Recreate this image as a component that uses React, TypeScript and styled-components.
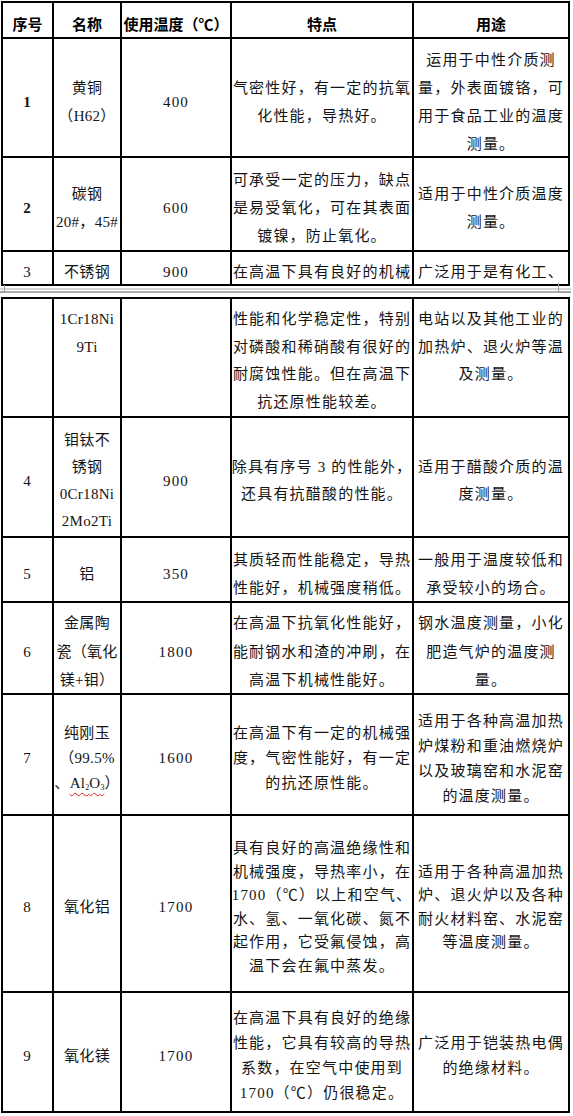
import React from "react";
import styled, { createGlobalStyle } from "styled-components";

const GlobalStyle = createGlobalStyle`
  html, body {
    margin: 0;
    padding: 0;
    background: #fff;
  }
  body {
    font-family: "Liberation Serif", "Noto Sans CJK SC", serif;
    color: #141414;
  }
`;

const Page = styled.div`
  padding: 1px 0 0 1px;
  width: 572px;
`;

const Sheet = styled.div<{ $rows: string }>`
  display: grid;
  grid-template-columns: 49px 66px 108px 180px 154px;
  grid-template-rows: ${(p) => p.$rows};
  gap: 2px;
  padding: 2px;
  background: #000;
  width: max-content;
`;

const HeadCell = styled.div`
  background: #fff;
  display: flex;
  align-items: center;
  justify-content: center;
  padding-top: 7px;
  font-family: "Noto Sans CJK SC", sans-serif;
  font-size: 15px;
  font-weight: 700;
  line-height: 20px;
  color: #000;
  white-space: nowrap;
`;

const Cell = styled.div<{ $lh: number; $top?: boolean; $bold?: boolean; $ls: number }>`
  background: #fff;
  display: flex;
  flex-direction: column;
  align-items: center;
  justify-content: ${(p) => (p.$top ? "flex-start" : "center")};
  padding-top: ${(p) => (p.$top ? 7 : 8)}px;
  font-size: 15px;
  letter-spacing: ${(p) => p.$ls}px;
  line-height: ${(p) => p.$lh}px;
  font-weight: ${(p) => (p.$bold ? 700 : 400)};
  white-space: nowrap;
  overflow: hidden;
`;

const Line = styled.div``;

const Sub = styled.sub`
  font-size: 8px;
  line-height: 0;
  vertical-align: -2px;
  letter-spacing: 0;
`;

const Spell = styled.span`
  text-decoration: underline wavy #e02424;
  text-decoration-skip-ink: none;
  text-underline-offset: 4px;
  text-decoration-thickness: 1px;
`;

const Break = styled.div`
  position: relative;
  height: 11px;
  padding-top: 2px;
  box-sizing: border-box;
  display: flex;
  flex-direction: column;
  gap: 1px;
  width: 571px;
  margin-left: -1px;

  &::before {
    content: "";
    position: absolute;
    left: 0;
    top: -1px;
    width: 4px;
    height: 7px;
    border-right: 1px solid #9a9a9a;
    border-bottom: 1px solid #9a9a9a;
  }
  &::after {
    content: "";
    position: absolute;
    left: 558px;
    top: -3px;
    width: 12px;
    height: 9px;
    border-left: 1px solid #9a9a9a;
    border-bottom: 1px solid #9a9a9a;
  }
`;

const Rule = styled.div<{ $tone: string }>`
  height: 2px;
  background: ${(p) => p.$tone};
`;

type Content = string | React.ReactNode[];

type Row = {
  lh: number;
  top?: boolean;
  bold?: boolean;
  cells: Content[];
};

const headers = ["序号", "名称", "使用温度（℃）", "特点", "用途"];

// letter spacing per column: the name column is narrow and holds latin runs
const spacing = [1.2, 0.3, 1.2, 1.2, 1.2];

const firstPart: Row[] = [
  {
    lh: 28,
    bold: true,
    cells: [
      "1",
      ["黄铜", "（H62）"],
      "400",
      ["气密性好，有一定的抗氧", "化性能，导热好。"],
      ["运用于中性介质测", "量，外表面镀铬，可", "用于食品工业的温度", "测量。"],
    ],
  },
  {
    lh: 28,
    bold: true,
    cells: [
      "2",
      ["碳钢", "20#，45#"],
      "600",
      ["可承受一定的压力，缺点", "是易受氧化，可在其表面", "镀镍，防止氧化。"],
      ["适用于中性介质温度", "测量。"],
    ],
  },
  {
    lh: 24,
    cells: ["3", "不锈钢", "900", "在高温下具有良好的机械", "广泛用于是有化工、"],
  },
];

const secondPart: Row[] = [
  {
    lh: 27.5,
    top: true,
    cells: [
      "",
      ["1Cr18Ni", "9Ti"],
      "",
      ["性能和化学稳定性，特别", "对磷酸和稀硝酸有很好的", "耐腐蚀性能。但在高温下", "抗还原性能较差。"],
      ["电站以及其他工业的", "加热炉、退火炉等温", "及测量。"],
    ],
  },
  {
    lh: 27,
    cells: [
      "4",
      ["钼钛不", "锈钢", "0Cr18Ni", "2Mo2Ti"],
      "900",
      ["除具有序号 3 的性能外，", "还具有抗醋酸的性能。"],
      ["适用于醋酸介质的温", "度测量。"],
    ],
  },
  {
    lh: 28,
    cells: [
      "5",
      "铝",
      "350",
      ["其质轻而性能稳定，导热", "性能好，机械强度稍低。"],
      ["一般用于温度较低和", "承受较小的场合。"],
    ],
  },
  {
    lh: 28.5,
    cells: [
      "6",
      ["金属陶", "瓷（氧化", "镁+钼）"],
      "1800",
      ["在高温下抗氧化性能好，", "能耐钢水和渣的冲刷，在", "高温下机械性能好。"],
      ["钢水温度测量，小化", "肥造气炉的温度测", "量。"],
    ],
  },
  {
    lh: 25,
    cells: [
      "7",
      [
        "纯刚玉",
        "（99.5%",
        <>
          、<Spell>Al<Sub>2</Sub>O<Sub>3</Sub></Spell>）
        </>,
      ],
      "1600",
      ["在高温下有一定的机械强", "度，气密性能好，有一定", "的抗还原性能。"],
      ["适用于各种高温加热", "炉煤粉和重油燃烧炉", "以及玻璃窑和水泥窑", "的温度测量。"],
    ],
  },
  {
    lh: 23.5,
    cells: [
      "8",
      "氧化铝",
      "1700",
      [
        "具有良好的高温绝缘性和",
        "机械强度，导热率小，在",
        "1700（℃）以上和空气、",
        "水、氢、一氧化碳、氮不",
        "起作用，它受氟侵蚀，高",
        "温下会在氟中蒸发。",
      ],
      ["适用于各种高温加热", "炉、退火炉以及各种", "耐火材料窑、水泥窑", "等温度测量。"],
    ],
  },
  {
    lh: 25,
    cells: [
      "9",
      "氧化镁",
      "1700",
      ["在高温下具有良好的绝缘", "性能，它具有较高的导热", "系数，在空气中使用到", "1700（℃）仍很稳定。"],
      ["广泛用于铠装热电偶", "的绝缘材料。"],
    ],
  },
];

const renderContent = (c: Content) =>
  typeof c === "string" ? <Line>{c}</Line> : c.map((l, i) => <Line key={i}>{l}</Line>);

const renderRows = (rows: Row[], prefix: string) =>
  rows.flatMap((row, r) =>
    row.cells.map((c, i) => (
      <Cell
        key={`${prefix}-${r}-${i}`}
        $lh={row.lh}
        $top={row.top}
        $bold={row.bold && i === 0}
        $ls={spacing[i]}
      >
        {renderContent(c)}
      </Cell>
    ))
  );

export default function App() {
  return (
    <>
      <GlobalStyle />
      <Page>
        <Sheet $rows="34px 117px 92px 32px">
          {headers.map((h) => (
            <HeadCell key={h}>{h}</HeadCell>
          ))}
          {renderRows(firstPart, "a")}
        </Sheet>
        <Break>
          <Rule $tone="#d6d6d6" />
          <Rule $tone="#ababab" />
        </Break>
        <Sheet $rows="117px 118px 63px 90px 119px 175px 118px">
          {renderRows(secondPart, "b")}
        </Sheet>
      </Page>
    </>
  );
}
